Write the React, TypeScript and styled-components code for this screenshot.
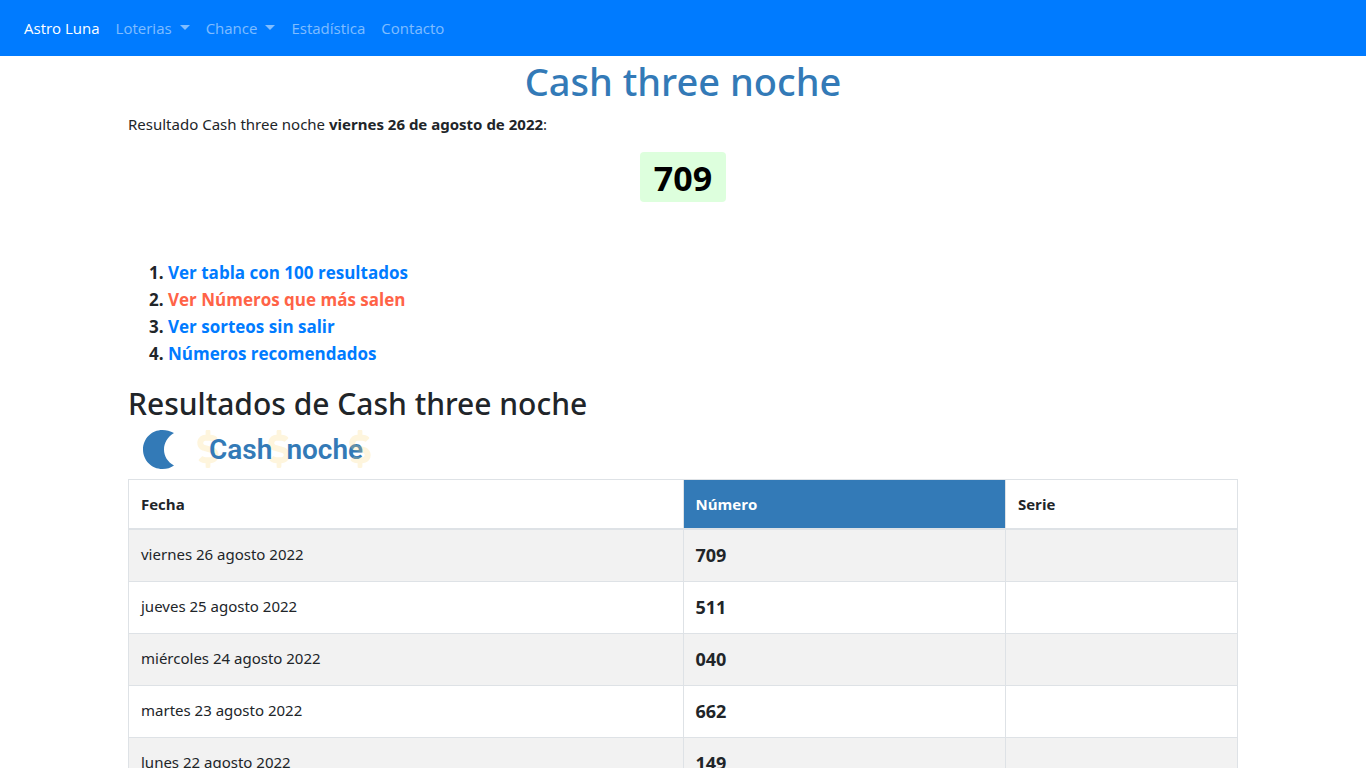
import React from "react";
import styled, { createGlobalStyle } from "styled-components";
import { FaDollarSign } from "react-icons/fa";

const GlobalStyle = createGlobalStyle`
  *, *::before, *::after { box-sizing: border-box; }
  body {
    margin: 0;
    background: #fff;
    color: #212529;
    font-family: "Segoe UI", "Open Sans", "Noto Sans", sans-serif;
    font-size: 15px;
    line-height: 24px;
  }
`;

const Navbar = styled.nav`
  display: flex;
  align-items: center;
  min-height: 56px;
  padding: 8px 16px;
  background: #007bff;
`;

const NavList = styled.ul`
  display: flex;
  margin: 0;
  padding: 0;
  list-style: none;
`;

const NavLink = styled.a<{ $active?: boolean; $dropdown?: boolean }>`
  display: block;
  padding: 8px;
  color: ${(p) => (p.$active ? "#fff" : "rgba(255, 255, 255, 0.5)")};
  text-decoration: none;

  &::after {
    content: "";
    display: ${(p) => (p.$dropdown ? "inline-block" : "none")};
    margin-left: 8px;
    vertical-align: 4px;
    border-top: 5px solid;
    border-right: 5px solid transparent;
    border-left: 5px solid transparent;
  }
`;

const Container = styled.main`
  width: 100%;
  max-width: 1140px;
  margin: 0 auto;
  padding: 0 15px;
`;

const Title = styled.h1`
  margin: 0 0 8px;
  padding-top: 2px;
  color: #337ab7;
  font-family: "Segoe UI", "Noto Sans", sans-serif;
  font-size: 38px;
  font-weight: 500;
  line-height: 46px;
  text-align: center;
`;

const Summary = styled.p`
  margin: 0 0 16px;
  font-family: "Segoe UI", "Noto Sans", sans-serif;
`;

const ResultRow = styled.div`
  display: flex;
  justify-content: center;
  margin-bottom: 57px;
`;

const ResultBadge = styled.strong`
  padding: 2px 14px 0;
  border-radius: 4px;
  background: #dfd;
  color: #000;
  font-size: 34px;
  line-height: 48px;
`;

const LinkList = styled.ol`
  margin: 0 0 16px;
  padding-left: 40px;
  font-size: 17px;
  font-weight: 700;
  line-height: 27px;
`;

const ListLink = styled.a<{ $accent?: boolean }>`
  color: ${(p) => (p.$accent ? "tomato" : "#007bff")};
  text-decoration: none;
`;

const Subtitle = styled.h2`
  margin: 0 0 4px;
  font-family: "Segoe UI", "Noto Sans", sans-serif;
  font-size: 30px;
  font-weight: 500;
  line-height: 42px;
`;

const Logo = styled.div`
  display: flex;
  align-items: flex-start;
  height: 50px;
  padding-left: 15px;
`;

const Moon = styled.svg`
  width: 31px;
  height: 40px;
  margin-top: 1px;
`;

const Wordmark = styled.div`
  position: relative;
  z-index: 0;
  display: flex;
  gap: 14px;
  margin-left: 35px;
  color: #337ab7;
  font-family: Roboto, sans-serif;
  font-size: 28px;
  font-weight: 600;
  line-height: 42px;
`;

const Coin = styled(FaDollarSign)<{ $left: string; $front?: boolean }>`
  position: absolute;
  z-index: ${(p) => (p.$front ? 1 : -1)};
  top: 1px;
  left: ${(p) => p.$left};
  width: 24px;
  height: 38px;
  color: rgba(250, 215, 120, 0.25);
`;

const Table = styled.table`
  width: 100%;
  table-layout: fixed;
  border-collapse: collapse;
  border: 1px solid #dee2e6;
`;

const HeadCell = styled.th<{ $width: string; $primary?: boolean }>`
  width: ${(p) => p.$width};
  padding: 12px;
  border: 1px solid #dee2e6;
  border-bottom-width: 2px;
  background: ${(p) => (p.$primary ? "#337ab7" : "transparent")};
  color: ${(p) => (p.$primary ? "#fff" : "inherit")};
  text-align: left;
`;

const BodyRow = styled.tr`
  &:nth-child(odd) { background: #f2f2f2; }
`;

const Cell = styled.td<{ $strong?: boolean }>`
  padding: 12px;
  border: 1px solid #dee2e6;
  vertical-align: top;
  font-family: "Segoe UI", "Noto Sans", sans-serif;
  font-size: ${(p) => (p.$strong ? "18px" : "15px")};
  font-weight: ${(p) => (p.$strong ? 700 : 400)};
  line-height: ${(p) => (p.$strong ? "27px" : "24px")};
`;

const navItems = [
  { label: "Astro Luna", active: true },
  { label: "Loterias", dropdown: true },
  { label: "Chance", dropdown: true },
  { label: "Estadística" },
  { label: "Contacto" },
];

const sections = [
  { label: "Ver tabla con 100 resultados" },
  { label: "Ver Números que más salen", accent: true },
  { label: "Ver sorteos sin salir" },
  { label: "Números recomendados" },
];

const results = [
  { date: "viernes 26 agosto 2022", number: "709" },
  { date: "jueves 25 agosto 2022", number: "511" },
  { date: "miércoles 24 agosto 2022", number: "040" },
  { date: "martes 23 agosto 2022", number: "662" },
  { date: "lunes 22 agosto 2022", number: "149" },
];

function CashLogo() {
  return (
    <Logo>
      <Moon viewBox="0 0 31 40" aria-hidden="true">
        <path
          d="M31 3C27 1 23.500 0 19.500 0C8.500 0 0 8.700 0 19.500S8.500 39 19.500 39C24 39 27.500 38 31 35.500C24.500 32 21 26 21 19.500S24.500 7 31 3Z"
          fill="#337ab7"
        />
      </Moon>
      <Wordmark>
        <span>Cash</span>
        <span>noche</span>
        <Coin $left="-13px" aria-hidden="true" />
        <Coin $left="58px" aria-hidden="true" />
        <Coin $left="139px" $front aria-hidden="true" />
      </Wordmark>
    </Logo>
  );
}

export default function App() {
  return (
    <>
      <GlobalStyle />
      <Navbar>
        <NavList>
          {navItems.map((item) => (
            <li key={item.label}>
              <NavLink href="#" $active={item.active} $dropdown={item.dropdown}>
                {item.label}
              </NavLink>
            </li>
          ))}
        </NavList>
      </Navbar>
      <Container>
        <Title>Cash three noche</Title>
        <Summary>
          Resultado Cash three noche <strong>viernes 26 de agosto de 2022</strong>:
        </Summary>
        <ResultRow>
          <ResultBadge>709</ResultBadge>
        </ResultRow>
        <LinkList>
          {sections.map((item) => (
            <li key={item.label}>
              <ListLink href="#" $accent={item.accent}>{item.label}</ListLink>
            </li>
          ))}
        </LinkList>
        <Subtitle>Resultados de Cash three noche</Subtitle>
        <CashLogo />
        <Table>
          <thead>
            <tr>
              <HeadCell scope="col" $width="50%">Fecha</HeadCell>
              <HeadCell scope="col" $width="auto" $primary>Número</HeadCell>
              <HeadCell scope="col" $width="232px">Serie</HeadCell>
            </tr>
          </thead>
          <tbody>
            {results.map((row) => (
              <BodyRow key={row.date}>
                <Cell>{row.date}</Cell>
                <Cell $strong>{row.number}</Cell>
                <Cell />
              </BodyRow>
            ))}
          </tbody>
        </Table>
      </Container>
    </>
  );
}
